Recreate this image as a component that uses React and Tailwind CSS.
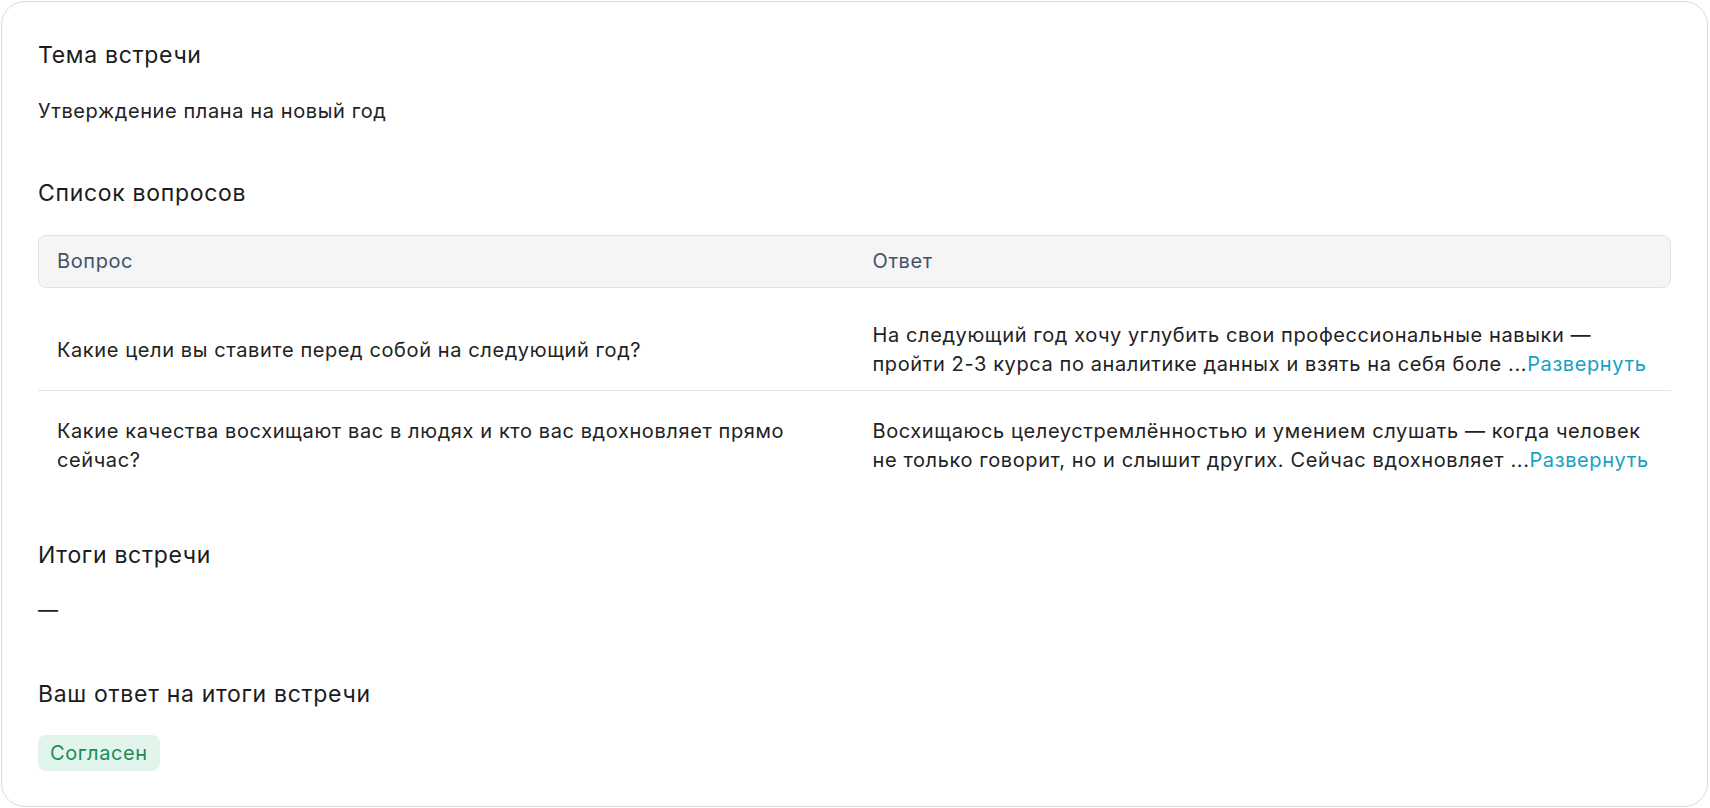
import React from "react";

const questions = [
  {
    q: "Какие цели вы ставите перед собой на следующий год?",
    a: (
      <>
        На следующий год хочу углубить свои профессиональные навыки —<br />
        пройти 2-3 курса по аналитике данных и взять на себя боле ...
      </>
    ),
  },
  {
    q: "Какие качества восхищают вас в людях и кто вас вдохновляет прямо сейчас?",
    a: (
      <>
        Восхищаюсь целеустремлённостью и умением слушать — когда человек<br />
        не только говорит, но и слышит других. Сейчас вдохновляет ...
      </>
    ),
  },
];

const SectionTitle = ({ children, className = "" }) => (
  <h2
    className={`text-[23px] leading-[32px] font-normal tracking-[0.03em] text-[#1c1c1c] ${className}`}
  >
    {children}
  </h2>
);

export default function App() {
  return (
    <div className="p-px bg-white font-['Inter','Noto_Sans',sans-serif]">
      <div className="w-[1707px] h-[806px] rounded-[24px] border border-[#d6dbe1] bg-white px-[36px] pt-[37px] flex flex-col">
        <SectionTitle>Тема встречи</SectionTitle>
        <p className="mt-[26px] text-[20px] leading-[29px] tracking-[0.03em] text-[#222]">
          Утверждение плана на новый год
        </p>

        <SectionTitle className="mt-[51px]">Список вопросов</SectionTitle>

        <div className="mt-[26px]">
          <div className="grid grid-cols-2 rounded-[8px] border border-[#e3e3e3] bg-[#f5f5f5] py-[11px] text-[20px] leading-[29px] tracking-[0.03em] text-[#3f5468]">
            <div className="px-[18px]">Вопрос</div>
            <div className="px-[18px]">Ответ</div>
          </div>
          <div className="pt-[7px]">
            {questions.map((item, i) => (
              <div
                key={i}
                className={`grid grid-cols-2 px-px pt-[26px] pb-[11px] text-[20px] leading-[29px] tracking-[0.03em] text-[#222] ${
                  i === 0 ? "border-b border-[#e5e5e5]" : ""
                }`}
              >
                <div className="px-[18px] flex items-center">{item.q}</div>
                <div className="px-[18px] whitespace-nowrap">
                  {item.a}
                  <button type="button" className="tracking-[0.03em] text-[#15a1c6]">
                    Развернуть
                  </button>
                </div>
              </div>
            ))}
          </div>
        </div>

        <SectionTitle className="mt-[53px]">Итоги встречи</SectionTitle>
        <p className="mt-[25px] text-[20px] leading-[29px] text-[#222]">—</p>

        <SectionTitle className="mt-[53px]">Ваш ответ на итоги встречи</SectionTitle>
        <div className="mt-[25px]">
          <span className="inline-flex h-[36px] items-center rounded-[8px] bg-[#e2f5ec] px-[12px] text-[20px] tracking-[0.03em] text-[#1d8a54]">
            Согласен
          </span>
        </div>
      </div>
    </div>
  );
}
